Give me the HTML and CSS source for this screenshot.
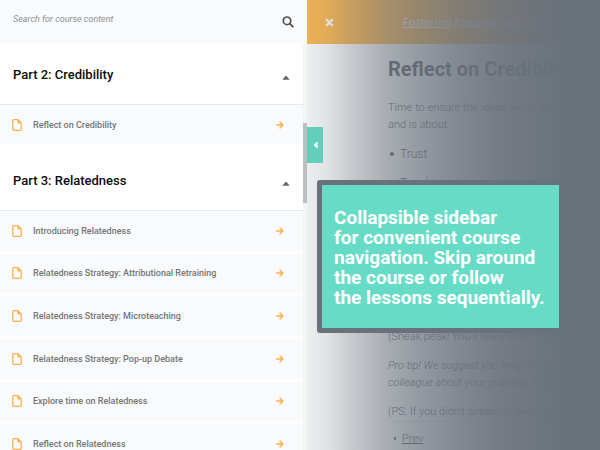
FILE: index.html
```html
<!DOCTYPE html>
<html lang="en">
<head>
<meta charset="utf-8">
<title>Reflect on Credibility</title>
<link rel="stylesheet" href="styles.css">
</head>
<body>
<svg class="sprite" aria-hidden="true">
  <symbol id="page" viewBox="0 0 10 12"><path d="M6 .7H1.6Q.8.7.8 1.5v9q0 .8.8.8h6.8q.8 0 .8-.8V3.9zM6 .7v3.2h3.2" fill="none" stroke="currentColor" stroke-width="1.3" stroke-linejoin="round"/></symbol>
  <symbol id="arrow" viewBox="0 0 8 8"><path d="M.7 4h6M4 1l3 3-3 3" fill="none" stroke="currentColor" stroke-width="1.4" stroke-linecap="round" stroke-linejoin="round"/></symbol>
  <symbol id="up" viewBox="0 0 8 5"><path d="M.3 4.7 3.5.9q.5-.5 1 0l3.2 3.8z" fill="currentColor"/></symbol>
  <symbol id="left" viewBox="0 0 5 8"><path d="M4.7.3.9 3.5q-.5.5 0 1l3.8 3.2z" fill="currentColor"/></symbol>
</svg>
<div class="layout">
  <aside class="sidebar">
    <form class="search">
      <input class="search-input" type="search" aria-label="Search for course content" placeholder="Search for course content">
      <button class="search-button" type="button" aria-label="Search"><svg viewBox="0 0 12 12" width="12" height="12"><circle cx="5" cy="4.8" r="3.8" fill="none" stroke="currentColor" stroke-width="1.7"/><path d="m7.8 7.6 3 3" stroke="currentColor" stroke-width="2" stroke-linecap="round"/></svg></button>
    </form>
    <section class="part">
      <h2 class="part-heading"><button class="part-toggle" type="button" aria-expanded="true">Part 2: Credibility<svg class="caret" width="8" height="5"><use href="#up"/></svg></button></h2>
      <nav class="lessons">
        <a class="lesson" href="#"><svg class="page" width="10" height="12"><use href="#page"/></svg><span class="lesson-name">Reflect on Credibility</span><svg width="8" height="8"><use href="#arrow"/></svg></a>
      </nav>
    </section>
    <section class="part">
      <h2 class="part-heading"><button class="part-toggle" type="button" aria-expanded="true">Part 3: Relatedness<svg class="caret" width="8" height="5"><use href="#up"/></svg></button></h2>
      <nav class="lessons lessons-long">
        <a class="lesson" href="#"><svg class="page" width="10" height="12"><use href="#page"/></svg><span class="lesson-name">Introducing Relatedness</span><svg width="8" height="8"><use href="#arrow"/></svg></a>
        <a class="lesson" href="#"><svg class="page" width="10" height="12"><use href="#page"/></svg><span class="lesson-name">Relatedness Strategy: Attributional Retraining</span><svg width="8" height="8"><use href="#arrow"/></svg></a>
        <a class="lesson" href="#"><svg class="page" width="10" height="12"><use href="#page"/></svg><span class="lesson-name">Relatedness Strategy: Microteaching</span><svg width="8" height="8"><use href="#arrow"/></svg></a>
        <a class="lesson" href="#"><svg class="page" width="10" height="12"><use href="#page"/></svg><span class="lesson-name">Relatedness Strategy: Pop-up Debate</span><svg width="8" height="8"><use href="#arrow"/></svg></a>
        <a class="lesson" href="#"><svg class="page" width="10" height="12"><use href="#page"/></svg><span class="lesson-name">Explore time on Relatedness</span><svg width="8" height="8"><use href="#arrow"/></svg></a>
        <a class="lesson" href="#"><svg class="page" width="10" height="12"><use href="#page"/></svg><span class="lesson-name">Reflect on Relatedness</span><svg width="8" height="8"><use href="#arrow"/></svg></a>
      </nav>
    </section>
    <div class="track"><div class="thumb"></div></div>
  </aside>
  <main class="main">
    <header class="topbar">
      <button class="close" type="button" aria-label="Close"><svg viewBox="0 0 9 9" width="9" height="9"><path d="m1.7 1.7 5.6 5.6m0-5.6L1.7 7.3" stroke="currentColor" stroke-width="2.2" stroke-linecap="round"/></svg></button>
      <a class="course" href="#">Fostering Engagement Online</a>
    </header>
    <article class="content">
      <h1 class="title">Reflect on Credibility</h1>
      <p class="text">Time to ensure the ideas settle deep<br>and is about</p>
      <ul class="points"><li>Trust</li><li>Teach</li></ul>
      <div class="notes">
        <p class="text">(Sneak peak! You’ll learn more about</p>
        <p class="text tip">Pro tip! We suggest you heighten the<br>colleague about your goal and record</p>
        <p class="text">(PS: If you didn’t already make a co</p>
      </div>
      <footer class="pager"><svg width="3" height="5" viewBox="0 0 5 8"><use href="#left"/></svg><a class="prev" href="#">Prev</a></footer>
    </article>
    <div class="shade"></div>
    <button class="collapse" type="button" aria-label="Collapse sidebar"><svg width="5" height="8"><use href="#left"/></svg></button>
    <div class="callout">Collapsible sidebar<br>for convenient course<br>navigation. Skip around<br>the course or follow<br>the lessons sequentially.</div>
  </main>
</div>
</body>
</html>
```
FILE: styles.css
```css
* { box-sizing: border-box; }
body { margin: 0; font-family: Roboto, sans-serif; background: #fff; }
button { margin: 0; padding: 0; border: 0; background: none; font: inherit; color: inherit; }
h1, h2, p, ul { margin: 0; }
svg { display: block; flex: none; }
.sprite { position: absolute; width: 0; height: 0; }

.layout { display: grid; grid-template-columns: 307px 1fr; height: 100vh; overflow: hidden; }

.sidebar { position: relative; padding-right: 4px; overflow: hidden; background: #fff; }
.search { display: flex; align-items: center; height: 44px; padding: 0 9px 0 13px; margin-right: -4px; background: #f8fafc; }
.search-input { flex: 1; min-width: 0; height: 20px; margin-bottom: 6px; padding: 0; border: 0; outline: 0; background: none; font: italic 9px/12px Roboto, sans-serif; color: #888; }
.search-input::placeholder { color: #8d8f91; }
.search-button { margin-right: 4px; color: #555; }
.part { margin-bottom: 6px; }
.part-heading { height: 61px; border-bottom: 1px solid #e4eaf2; }
.part-toggle { display: flex; align-items: center; justify-content: space-between; width: 100%; height: 60px; padding: 2px 13px 0; font-size: 13px; font-weight: 500; line-height: 16px; color: #0c0c0c; }
.caret { margin-top: 4px; color: #666; }
.lessons { display: grid; grid-auto-rows: 1fr; gap: 3px; }
.lessons-long { min-height: 253px; }
.lesson { display: flex; align-items: center; min-height: 39px; padding: 0 19px 0 12px; background: #f8fafc; color: #f9b04e; text-decoration: none; }
.lesson-name { flex: 1; padding-left: 11px; font-size: 9px; font-weight: 500; line-height: 12px; color: #757575; }
.track { position: absolute; top: 44px; right: 0; bottom: 0; width: 4px; background: #f3f4f4; }
.thumb { height: 80px; margin-top: 79px; background: #bdbebf; }

.main { position: relative; min-width: 0; background: #fff; }
.topbar { display: flex; align-items: center; height: 44px; padding-left: 18px; background: #ffb94f; }
.close { width: 10px; color: #fff; }
.course { margin-left: 68px; font: 11px/14px "Noto Sans", sans-serif; color: #f2f6ff; white-space: nowrap; }
.content { padding: 13px 0 0 81px; color: #56606a; white-space: nowrap; }
.title { font-size: 20px; font-weight: 700; line-height: 24px; }
.text { font-size: 11px; font-weight: 300; line-height: 17px; }
.title + .text { margin-top: 18px; }
.points { display: grid; gap: 11px; margin-top: 12px; padding-left: 2px; font-size: 12px; font-weight: 300; line-height: 18px; list-style: none; }
.points li { display: flex; align-items: center; gap: 6px; }
.points li::before { content: ""; width: 4px; height: 4px; border-radius: 50%; background: currentColor; }
.notes { display: grid; gap: 12px; margin-top: 136px; }
.tip { font-style: italic; }
.pager { display: flex; align-items: center; gap: 6px; margin: 1px 0 0 5px; padding-top: 8px; border-top: 1px solid #e6e8ea; font-size: 11px; font-weight: 300; line-height: 17px; }
.prev { color: inherit; }
.shade { position: absolute; inset: 0; background: linear-gradient(90deg, rgba(105,113,123,.12) 0, rgba(105,113,123,.2) 20px, rgba(105,113,123,.38) 45px, rgba(105,113,123,.58) 80px, rgba(105,113,123,.7) 110px, rgba(105,113,123,.83) 150px, rgba(105,113,123,.93) 195px, #69717b 260px); }
.collapse { position: absolute; top: 127px; left: 0; display: grid; place-items: center; width: 16px; height: 36px; background: #62cfba; color: #eefaf7; }
.callout { position: absolute; top: 180px; left: 10px; padding: 23px 15px 20px 12px; border: 5px solid #69717b; border-radius: 3px; background: #66dcc6 padding-box; font-size: 19px; font-weight: 700; line-height: 20px; color: #fff; white-space: nowrap; }
```
